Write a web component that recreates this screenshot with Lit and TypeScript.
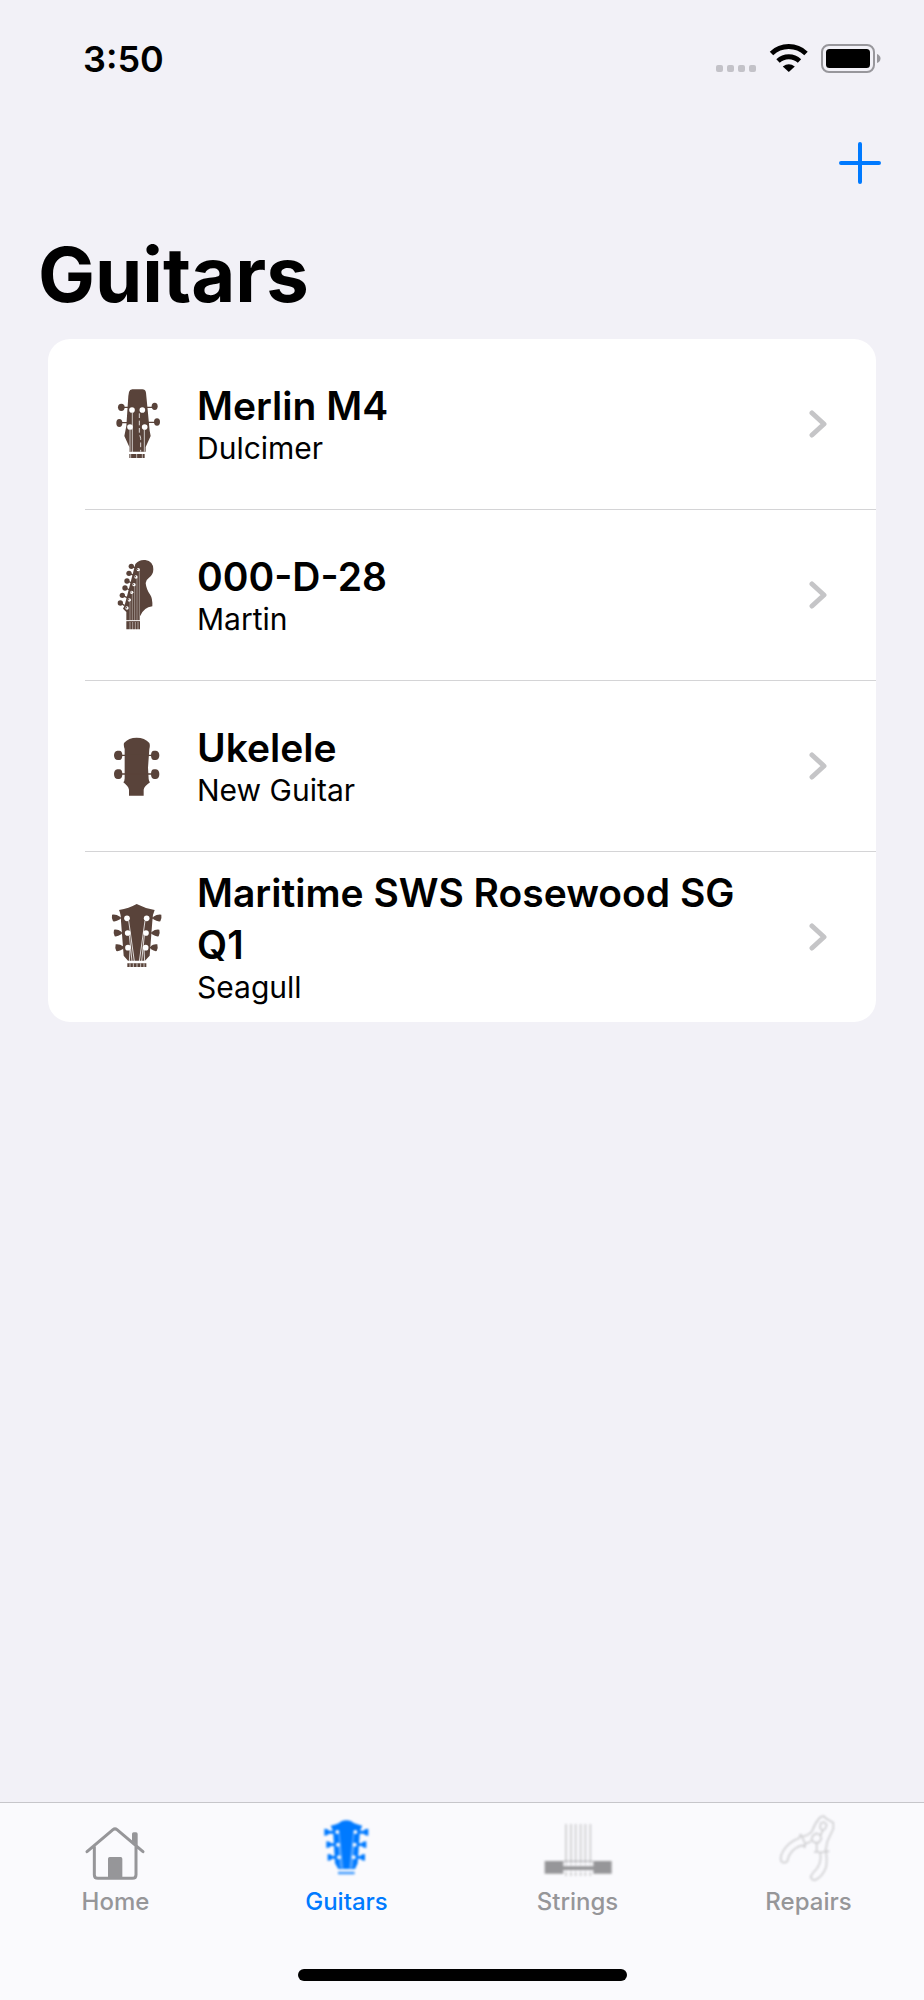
import { LitElement, html, css, TemplateResult } from "lit";
import { customElement, property, state } from "lit/decorators.js";

type Guitar = { name: string; brand: string; icon: TemplateResult };

const merlinIcon = html`<svg class="head" viewBox="0 12 240 300" aria-hidden="true">
  <path class="wood" d="M97 58h30q9 0 11 10l6 62 5 52 3 16-15 33v14H88v-14L73 198l6-30 6-90 2-12q2-8 10-8z"/>
  <path class="peg" d="M68 112h20M136 112h24M62 158h22M142 157h24"/>
  <g class="wood"><ellipse cx="64" cy="112" rx="10" ry="11"/><ellipse cx="164" cy="109" rx="9" ry="11"/><ellipse cx="58" cy="159" rx="9" ry="12"/><ellipse cx="171" cy="156" rx="9" ry="11"/></g>
  <g class="light"><circle cx="96" cy="120" r="8.500"/><circle cx="127" cy="120" r="8.500"/><circle cx="90" cy="171" r="8.500"/><circle cx="134" cy="171" r="8.500"/></g>
  <path class="string" d="M97 128v134M90 180v65M133 178v67" opacity=".7"/>
  <path class="string faint" d="M118 130v60l4 15v40" opacity=".8"/>
  <path class="wood" d="M88 252h46v12H88z"/><path class="string" d="M92 252v12M110 252v12M127 252v12" opacity=".6"/>
</svg>`;

const stratIcon = html`<svg class="head" viewBox="0 13 240 300" aria-hidden="true">
  <path class="wood" d="M106 70q12-14 30-12 24 4 24 28 0 16-13 25-9 6-10 16 2 20 14 36 7 10 6 34-26 3-37 30v39H79v-52l-10-10 5-10z"/>
  <path class="peg" d="M95 78l14 4M88 98l14 6M82 121l14 6M76 142l14 6M68 165l14 6M62 187l12 8"/>
  <g class="wood"><circle cx="94" cy="77" r="8"/><circle cx="87" cy="98" r="8"/><circle cx="81" cy="121" r="8"/><circle cx="75" cy="142" r="8"/><circle cx="67" cy="164" r="8"/><circle cx="61" cy="187" r="8"/></g>
  <path class="string" d="M118 92v148M111 112v128M104 136v104M97 158v82M90 184v56" opacity=".4"/>
  <g class="light"><circle cx="115" cy="87" r="5"/><circle cx="108" cy="109" r="5"/><circle cx="102" cy="132" r="5"/><circle cx="95" cy="155" r="5"/><circle cx="88" cy="178" r="5"/><circle cx="81" cy="202" r="5"/></g>
  <g class="wood"><circle cx="113" cy="86" r="2"/><circle cx="106" cy="108" r="2"/><circle cx="100" cy="131" r="2"/><circle cx="93" cy="154" r="2"/><circle cx="86" cy="177" r="2"/><circle cx="79" cy="201" r="2"/></g>
  <path class="string" d="M78 240h44" stroke-width="4"/>
  <path class="string" d="M90 244v24M98 244v24M106 244v24M114 244v24" opacity=".5"/>
</svg>`;

const ukeleleIcon = html`<svg class="head" viewBox="0 -15 240 300" aria-hidden="true">
  <path class="wood" d="M72 66q14-16 38-16t38 16q3 7 0 18l-4 56 2 34q1 8 4 10-17 12-19 22v18H87v-18q-2-10-17-22 4-4 4-12V84q-4-10-2-18z"/>
  <path class="peg" d="M60 103h100M60 159h100" stroke-width="6"/>
  <path class="wood" d="M52 89h6q9 0 9 14t-9 14h-4q-12 0-12-14 0-12 10-14zM52 145h6q9 0 9 14t-9 15h-4q-12 0-12-15 0-12 10-14zM168 89h-6q-9 0-9 14t9 14h4q12 0 12-14 0-12-10-14zM168 145h-6q-9 0-9 14t9 15h4q12 0 12-15 0-12-10-14z"/>
</svg>`;

const seagullIcon = html`<svg class="head" viewBox="0 -11 240 300" aria-hidden="true">
  <path class="wood" d="M57 58q30-5 53-18 24 13 54 18-7 14-7 34l-8 103-14 15H84l-13-15L63 92q0-22-6-34z"/>
  <path class="peg" d="M50 82h20M55 127h20M60 171h16M150 82h22M150 127h18M146 171h16" stroke-width="6"/>
  <path class="wood" d="M36 72q12-2 24 6v8q-12 8-21 6-5-10-3-20zM42 117q12-2 22 6v8q-12 8-20 6-5-10-2-20zM47 161q12-2 22 6v8q-12 8-20 6-5-10-2-20zM184 72q-12-2-24 6v8q12 8 21 6 5-10 3-20zM178 117q-12-2-22 6v8q12 8 20 6 5-10 2-20zM172 161q-12-2-20 6v8q12 8 18 6 5-10 2-20z"/>
  <path class="string" d="M86 90l17 122M88 134l8 78M90 178l-2 34M135 90l-17 122M133 134l-8 78M132 178l2 34" opacity=".8"/>
  <g class="light"><circle cx="81" cy="83" r="8.500"/><circle cx="83" cy="127" r="8.500"/><circle cx="84" cy="171" r="8.500"/><circle cx="140" cy="83" r="8.500"/><circle cx="138" cy="127" r="8.500"/><circle cx="137" cy="171" r="8.500"/></g>
  <path class="wood" d="M82 218h57v11H82z"/><path class="string" d="M90 218v11M100 218v11M111 218v11M122 218v11M132 218v11" opacity=".7"/>
</svg>`;

const homeIcon = html`<svg class="glyph" viewBox="108 60 240 240" aria-hidden="true">
  <path class="line" d="M141 185l78-66q6-5 12 0l78 66M163 170v84q0 11 11 11h103q11 0 11-11v-84"/>
  <path class="fill" d="M276 152v-20q0-5 5-5h7q5 0 5 5v36zM204 206q0-5 5-5h33q5 0 5 5v60h-43z"/>
</svg>`;

const guitarsIcon = html`<svg class="glyph soft" viewBox="801 60 240 240" aria-hidden="true">
  <path class="fill" d="M872 107q25-5 32-13 15-7 30 0 10 9 33 13-8 12-8 28l-6 85-8 17h-50l-10-17-5-85q0-16-8-28z"/>
  <path class="fill" d="M853 116q12 0 14 6h12v9h-12q-4 6-14 6zM859 154q12 0 14 6h10v8h-10q-4 6-14 6zM863 192q12 0 14 6h8v8h-8q-4 6-14 6zM985 116q-12 0-14 6h-12v9h12q4 6 14 6zM979 154q-12 0-14 6h-10v8h10q4 6 14 6zM975 192q-12 0-14 6h-8v8h8q4 6 14 6z"/>
  <path class="cut" d="M897 130l11 106M897 168l5 66M941 130l-11 106M941 168l-5 66"/>
  <g class="hole"><circle cx="892" cy="126" r="6"/><circle cx="894" cy="164" r="6"/><circle cx="897" cy="202" r="6"/><circle cx="946" cy="126" r="6"/><circle cx="944" cy="164" r="6"/><circle cx="941" cy="202" r="6"/></g>
  <path class="fill" d="M894 245h50v8h-50z" opacity=".7"/>
</svg>`;

const stringsIcon = html`<svg class="glyph soft" viewBox="54 60 240 240" aria-hidden="true">
  <path class="thin" stroke-width="5" opacity=".45" d="M138 102v156M153 102v156M167 102v156M182 102v156M196 102v156M211 102v156"/>
  <path class="hole" d="M130 218h90v30h-90z" opacity=".5"/>
  <path class="fill" d="M74 213h56v38H74zM220 213h55v38h-55zM130 229h90v11h-90z"/>
  <path class="thin" stroke-width="4" opacity=".6" d="M130 214h90"/>
</svg>`;

const repairsIcon = html`<svg class="glyph soft" viewBox="747 60 240 240" aria-hidden="true">
  <path class="thin" stroke-width="5" opacity=".42" d="M842 132l-4 12q-32 12-48 38-12 20-6 32 8 8 18 0 4-20 16-32 14-14 32-16l4 6 2-10-14-30M858 160q10-2 14-6M848 140q18-4 28-16 8-24 24-42l10-4 12 10 18 10 0 18-18 38-6 32M890 158v28M882 186h12l10 2 12-4 12 0M900 190q6 24-8 44-14 14-20 26 4 12 14 10 22-10 32-38 4-22 0-46M902 100l10-4 8 8-4 12-8 6-8-8zM908 122l-6 14M878 138l10-8 12 4 4 12-8 12h-12l-10-8z"/>
</svg>`;

@customElement("guitar-row")
class GuitarRow extends LitElement {
  @property({ attribute: false }) guitar!: Guitar;

  static styles = css`
    :host { display: block; }
    .row { display: flex; align-items: center; min-height: 170px; padding: 0 49px 0 52px; box-sizing: border-box; color: #000; text-decoration: none; }
    .head { width: 80px; height: 100px; flex: none; margin-right: 17px; }
    .wood { fill: #59433a; }
    .peg { stroke: #59433a; stroke-width: 4; }
    .light { fill: #fff; }
    .string { stroke: #fff; stroke-width: 3; fill: none; }
    .faint { stroke-dasharray: 14 8; }
    .text { flex: 1; min-width: 0; padding-bottom: 4px; margin-right: 40px; }
    .name { display: block; font-size: 39px; line-height: 52px; font-weight: 600; }
    .brand { display: block; font-size: 30px; line-height: 32px; }
    .chevron { width: 18px; height: 28px; flex: none; fill: none; stroke: #c5c5c7; stroke-width: 5; stroke-linecap: round; stroke-linejoin: round; }
  `;

  render() {
    return html`<a class="row" href="#guitar">
      ${this.guitar.icon}
      <span class="text"><span class="name">${this.guitar.name}</span><span class="brand">${this.guitar.brand}</span></span>
      <svg class="chevron" viewBox="0 0 18 28" aria-hidden="true"><path d="M3 3l12 11L3 25"/></svg>
    </a>`;
  }
}

@customElement("app-root")
class AppRoot extends LitElement {
  @state() private tab = "Guitars";

  private guitars: Guitar[] = [
    { name: "Merlin M4", brand: "Dulcimer", icon: merlinIcon },
    { name: "000-D-28", brand: "Martin", icon: stratIcon },
    { name: "Ukelele", brand: "New Guitar", icon: ukeleleIcon },
    { name: "Maritime SWS Rosewood SG Q1", brand: "Seagull", icon: seagullIcon },
  ];

  private tabs = [
    { label: "Home", icon: homeIcon },
    { label: "Guitars", icon: guitarsIcon },
    { label: "Strings", icon: stringsIcon },
    { label: "Repairs", icon: repairsIcon },
  ];

  static styles = css`
    :host { display: flex; flex-direction: column; min-height: 100vh; background: #f2f1f7; color: #000; font-family: Inter, "Liberation Sans", sans-serif; }
    .status { display: flex; align-items: center; justify-content: space-between; height: 118px; padding: 0 43px 0 83px; box-sizing: border-box; }
    .time { font-size: 36px; line-height: 44px; font-weight: 600; }
    .signals { width: 166px; height: 32px; }
    .bar { display: flex; justify-content: flex-end; padding: 20px 39px 0 0; }
    .add { border: 0; background: none; padding: 0; width: 50px; height: 50px; cursor: pointer; }
    .plus { display: block; width: 50px; height: 50px; stroke: #007aff; stroke-width: 4; stroke-linecap: round; }
    h1 { margin: 0; padding: 41px 38px 20px; font-size: 76px; line-height: 90px; font-weight: 700; }
    .list { list-style: none; margin: 0 48px; padding: 0; background: #fff; border-radius: 22px; overflow: hidden; }
    .item + .item::before { content: ""; display: block; height: 1px; margin-left: 37px; background: #d4d4d6; }
    main { flex: 1; }
    .tabs { border-top: 1px solid #c6c6ca; background: #fafafd; }
    .tabrow { display: grid; grid-template-columns: repeat(4, 1fr); padding-top: 7px; }
    .tab { --ink: #969699; display: flex; flex-direction: column; align-items: center; border: 0; background: none; padding: 0; font: 500 24px/24px Inter, "Liberation Sans", sans-serif; color: var(--ink); cursor: pointer; }
    .tab.on { --ink: #007aff; }
    .glyph { width: 80px; height: 80px; }
    .soft { filter: blur(0.8px); }
    .line { fill: none; stroke: var(--ink); stroke-width: 9; stroke-linecap: round; stroke-linejoin: round; }
    .thin { fill: none; stroke: var(--ink); stroke-linejoin: round; }
    .fill { fill: var(--ink); }
    .hole { fill: #fafafd; }
    .cut { stroke: #fafafd; stroke-width: 3; opacity: 0.5; }
    .indicator { width: 36%; max-width: 329px; height: 12px; border-radius: 6px; background: #000; margin: 55px auto 19px; }
  `;

  render() {
    return html`
      <div class="status">
        <span class="time">3:50</span>
        <svg class="signals" viewBox="0 0 166 32" role="img" aria-label="Wi-Fi on, battery full">
          <g fill="#c3c2c8"><rect x="1" y="22" width="7" height="7" rx="2"/><rect x="12" y="22" width="7" height="7" rx="2"/><rect x="23" y="22" width="7" height="7" rx="2"/><rect x="34" y="22" width="7" height="7" rx="2"/></g>
          <path d="M56.500 10.500a25 25 0 0 1 34.500 0M63 18a16 16 0 0 1 21.500 0" fill="none" stroke="#000" stroke-width="5"/>
          <path d="M73.800 29l-6-5.500q6-4.500 12 0z"/>
          <rect x="107" y="2" width="52" height="27" rx="7" fill="none" stroke="#98979c" stroke-width="2"/>
          <rect x="111" y="6" width="44" height="19" rx="3.500"/>
          <path d="M162 11q3.500 1.500 3.500 4.500t-3.500 4.500z" fill="#98979c"/>
        </svg>
      </div>
      <main>
        <div class="bar">
          <button class="add" aria-label="Add guitar"><svg class="plus" viewBox="0 0 50 50" aria-hidden="true"><path d="M25 6v38M6 25h38"/></svg></button>
        </div>
        <h1>Guitars</h1>
        <ul class="list">
          ${this.guitars.map((g) => html`<li class="item"><guitar-row .guitar=${g}></guitar-row></li>`)}
        </ul>
      </main>
      <nav class="tabs">
        <div class="tabrow">
          ${this.tabs.map((t) => html`<button class="tab ${t.label === this.tab ? "on" : ""}" @click=${() => (this.tab = t.label)}>${t.icon}<span>${t.label}</span></button>`)}
        </div>
        <div class="indicator"></div>
      </nav>`;
  }
}
